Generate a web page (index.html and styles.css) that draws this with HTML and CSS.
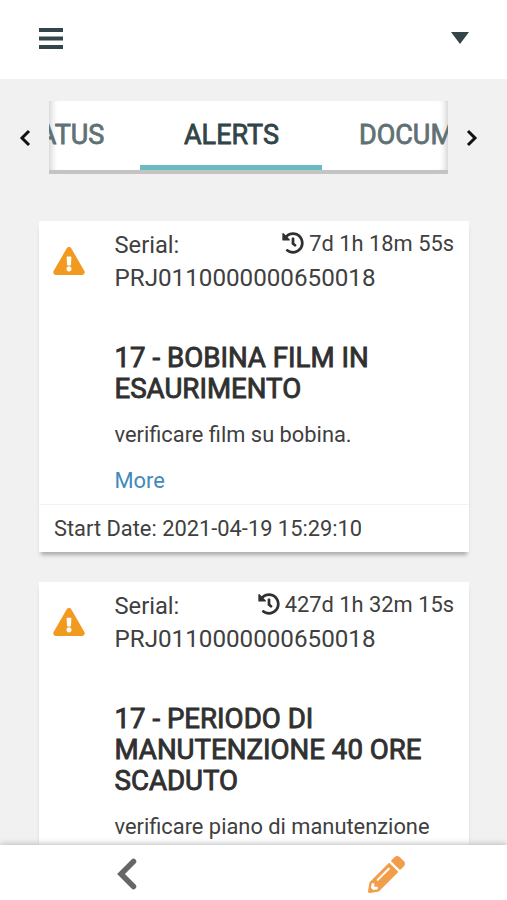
FILE: index.html
```html
<!DOCTYPE html>
<html lang="it">
<head>
<meta charset="utf-8">
<title>Alerts</title>
<link rel="stylesheet" href="styles.css">
</head>
<body>
<svg class="symbols" aria-hidden="true">
  <symbol id="warning" viewBox="0 0 576 512"><path d="M569.517 440.013C587.975 472.007 564.806 512 527.94 512H48.054c-36.937 0-59.999-40.055-41.577-71.987L246.423 23.985c18.467-32.009 64.72-31.951 83.154 0l239.94 416.028zM288 354c-25.405 0-46 20.595-46 46s20.595 46 46 46 46-20.595 46-46-20.595-46-46-46zm-43.673-165.346l7.418 136c.347 6.364 5.609 11.346 11.982 11.346h48.546c6.373 0 11.635-4.982 11.982-11.346l7.418-136c.375-6.874-5.098-12.654-11.982-12.654h-63.383c-6.884 0-12.356 5.78-11.981 12.654z"/></symbol>
  <symbol id="history" viewBox="0 0 512 512"><path d="M504 255.531c.253 136.64-111.18 248.372-247.82 248.468-59.015.042-113.223-20.53-155.822-54.911-11.077-8.94-11.905-25.541-1.839-35.607l11.267-11.267c8.609-8.609 22.353-9.551 31.891-1.984C173.062 425.135 212.781 440 256 440c101.705 0 184-82.311 184-184 0-101.705-82.311-184-184-184-48.814 0-93.149 18.969-126.068 49.932l50.754 50.754c10.08 10.08 2.941 27.314-11.313 27.314H24c-8.837 0-16-7.163-16-16V38.627c0-14.254 17.234-21.393 27.314-11.314l49.372 49.372C129.209 34.136 189.552 8 256 8c136.81 0 247.747 110.78 248 247.531zm-180.912 78.784l9.823-12.63c8.138-10.463 6.253-25.542-4.21-33.679L288 256.349V152c0-13.255-10.745-24-24-24h-16c-13.255 0-24 10.745-24 24v135.651l65.409 50.874c10.463 8.137 25.541 6.253 33.679-4.21z"/></symbol>
</svg>
<div class="app">
  <header class="topbar">
    <svg class="menu" viewBox="0 0 24 21"><path d="M0 0h24v4H0zM0 8.5h24v4H0zM0 17h24v4H0z"/></svg>
    <svg class="caret" viewBox="0 0 18 12"><path d="M0 0h18L9 12z"/></svg>
  </header>
  <main class="content">
    <nav class="tabs">
      <svg class="arrow" viewBox="0 0 12 18"><path d="M10 2 3 9l7 7"/></svg>
      <div class="tab-window">
        <div class="tab-strip">
          <span class="tab tab-status">STATUS</span>
          <span class="tab tab-alerts">ALERTS</span>
          <span class="tab tab-documents">DOCUMENTS</span>
        </div>
      </div>
      <svg class="arrow" viewBox="0 0 12 18"><path d="m2 2 7 7-7 7"/></svg>
    </nav>
    <article class="card">
      <div class="card-body">
        <svg class="warning"><use href="#warning"/></svg>
        <div class="details">
          <div class="meta"><span>Serial:</span><span class="elapsed"><svg class="history"><use href="#history"/></svg><span>7d 1h 18m 55s</span></span></div>
          <div class="serial">PRJ0110000000650018</div>
          <h4 class="title">17 - BOBINA FILM IN<br>ESAURIMENTO</h4>
          <p class="description">verificare film su bobina.</p>
          <a class="more">More</a>
        </div>
      </div>
      <footer class="card-footer">Start Date: 2021-04-19 15:29:10</footer>
    </article>
    <article class="card">
      <div class="card-body">
        <svg class="warning"><use href="#warning"/></svg>
        <div class="details">
          <div class="meta"><span>Serial:</span><span class="elapsed"><svg class="history"><use href="#history"/></svg><span>427d 1h 32m 15s</span></span></div>
          <div class="serial">PRJ0110000000650018</div>
          <h4 class="title">17 - PERIODO DI<br>MANUTENZIONE 40 ORE<br>SCADUTO</h4>
          <p class="description">verificare piano di manutenzione</p>
        </div>
      </div>
    </article>
  </main>
  <footer class="bottombar">
    <svg class="back" viewBox="0 0 20 32"><path d="M16.5 3.5 4 16l12.5 12.5"/></svg>
    <svg class="pencil" viewBox="0 0 512 512"><path d="M497.9 142.1l-46.1 46.1c-4.7 4.7-12.3 4.7-17 0l-111-111c-4.7-4.7-4.7-12.3 0-17l46.1-46.1c18.7-18.7 49.1-18.7 67.9 0l60.1 60.1c18.8 18.7 18.8 49.1 0 67.9zM284.2 99.8L21.6 362.4.4 483.9c-2.9 16.4 11.4 30.6 27.8 27.8l121.5-21.3 262.6-262.6c4.7-4.7 4.7-12.3 0-17l-111-111c-4.8-4.7-12.4-4.7-17.1 0zM124.1 339.9c-5.5-5.5-5.5-14.3 0-19.8l154-154c5.5-5.5 14.3-5.5 19.8 0s5.5 14.3 0 19.8l-154 154c-5.5 5.5-14.3 5.5-19.8 0zM88 424h48v36.3l-64.5 11.3-31.1-31.1L51.7 376H88v48z"/></svg>
  </footer>
</div>
</body>
</html>
```
FILE: styles.css
```css
* { box-sizing: border-box; }
body { margin: 0; background: #f1f1f1; color: #404040; font-family: Roboto, sans-serif; }
svg { display: block; flex: none; }
.symbols { display: none; }
.app { display: flex; flex-direction: column; height: 900px; overflow: hidden; }

.topbar { flex: none; display: flex; justify-content: space-between; height: 79px; padding: 28px 38px 0 38.5px; background: #fff; fill: #334548; }
.menu { width: 24px; height: 21px; }
.caret { width: 18px; height: 12px; margin-top: 3.5px; }

.content { flex: 1; min-height: 0; overflow: hidden; padding-top: 22px; }
.tabs { display: flex; justify-content: space-between; padding: 0 29px 0 19px; }
.arrow { width: 12px; height: 18px; margin-top: 28px; fill: none; stroke: #111; stroke-width: 3; }
.tab-window { width: 399px; height: 73px; margin: 0 18px; overflow: hidden; background: #fff; border-bottom: 4px solid #c4c4c4;
  box-shadow: inset 8px 0 7px -6px #ccc, inset -8px 0 7px -6px #ccc; }
.tab-strip { display: flex; height: 69px; margin-left: -79px; }
.tab { flex: none; text-align: center; font-size: 27px; line-height: 69px; color: #607174; -webkit-text-stroke: 0.8px currentColor; }
.tab-status { width: 170px; padding-left: 2px; }
.tab-alerts { width: 182px; padding-left: 1px; color: #314447; border-bottom: 5px solid #68bdc2; }
.tab-documents { padding-left: 37px; }

.card { width: 430px; margin: 47px 0 0 39px; background: #fff; box-shadow: 0 5px 4px -2px #aaa; }
.card + .card { margin-top: 30px; }
.card-body { display: flex; padding: 7px 15px 8px 14px; }
.warning { width: 32px; height: 28px; margin: 19px 29.5px 0 0; fill: #f29a20; }
.details { flex: 1; white-space: nowrap; }
.meta { display: flex; justify-content: space-between; font-size: 23.7px; line-height: 34px; }
.elapsed { display: flex; gap: 5px; font-size: 21.85px; line-height: 31px; }
.history { width: 22px; height: 22px; margin-top: 4px; fill: #303030; }
.serial { font-size: 24.2px; line-height: 33px; }
.title { margin: 47px 0 0; font-size: 27.65px; font-weight: 400; line-height: 31px; color: #303030; -webkit-text-stroke: 0.9px currentColor; }
.description { margin: 15px 0 0; font-size: 21.85px; line-height: 31px; }
.more { display: block; margin-top: 15px; font-size: 21.85px; line-height: 31px; color: #4289bc; }
.card-footer { height: 48px; padding-left: 15px; border-top: 1px solid #f3f3f3; font-size: 21.85px; line-height: 48px; }

.bottombar { position: relative; flex: none; display: flex; height: 55px; background: #fff; box-shadow: 0 -1px 6px #bbb; }
.back { width: 20px; height: 32px; margin: 13px 0 0 117px; fill: none; stroke: #666; stroke-width: 5.5; stroke-linecap: round; }
.pencil { width: 37px; height: 37px; margin: 11px 0 0 231px; fill: #f29d4a; }
```
